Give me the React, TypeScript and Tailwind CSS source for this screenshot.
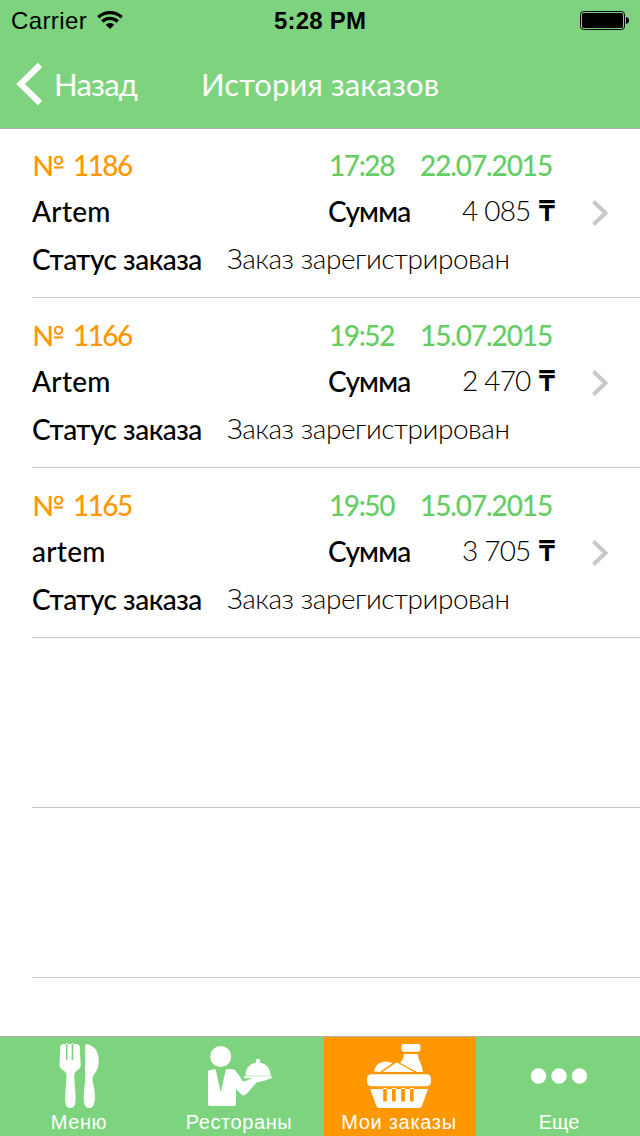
import type { ReactNode } from "react";

type Order = { id: string; name: string; time: string; date: string; sum: string };

const orders: Order[] = [
  { id: "1186", name: "Artem", time: "17:28", date: "22.07.2015", sum: "4 085" },
  { id: "1166", name: "Artem", time: "19:52", date: "15.07.2015", sum: "2 470" },
  { id: "1165", name: "artem", time: "19:50", date: "15.07.2015", sum: "3 705" },
];

function StatusBar() {
  return (
    <div className="flex h-10 items-center justify-between pr-[11px] pl-[11px] font-['Liberation_Sans',sans-serif] text-2xl leading-10 text-black">
      <div className="flex w-[263px] items-center gap-2.5">
        <span className="pt-0.5 tracking-[0.4px]">Carrier</span>
        <svg width="26" height="20" viewBox="0 0 26 20" fill="none" stroke="#000" strokeWidth="3.3">
          <path d="M1.3 7.2a17 17 0 0 1 23.4 0" />
          <path d="M5.3 11.5a11 11 0 0 1 15.4 0" />
          <path d="M13 19l-4.3-4.3a6 6 0 0 1 8.6 0z" fill="#000" stroke="none" />
        </svg>
      </div>
      <span className="grow pt-0.5 font-bold tracking-[0.2px]">5:28 PM</span>
      <svg width="50" height="20" viewBox="0 0 50 20">
        <rect x="1.5" y="1.5" width="44" height="18" rx="3" fill="none" stroke="#000" />
        <rect x="3" y="3" width="41" height="15" rx="1.5" />
        <path d="M47 7q3 .6 3 3.500t-3 3.500z" />
      </svg>
    </div>
  );
}

function Header() {
  return (
    <header className="relative z-10 h-[129px] shrink-0 border-b border-[#b2b2b2] bg-[#7ed47e]">
      <StatusBar />
      <div className="flex h-[88px] items-center pl-4 font-['Lato',sans-serif] text-[31px] leading-[88px] text-white">
        <svg width="27" height="44" viewBox="0 0 27 44" fill="none" stroke="#fff" strokeWidth="6">
          <path d="M24 3L4.500 22L24 41" />
        </svg>
        <span className="w-[147px] pl-[11px] tracking-[-0.8px]">Назад</span>
        <h1 className="pl-[11px] tracking-[0.1px]">История заказов</h1>
      </div>
    </header>
  );
}

function OrderRow({ order }: { order: Order }) {
  return (
    <li className="ml-8 flex h-[170px] items-center border-b border-[#c8c7cc] text-[28px] leading-10 font-medium text-black">
      <div className="mt-px h-[136px] w-[560px]">
        <div className="flex h-[46px]">
          <span className="w-[41px] text-[#ff9800]">№</span>
          <span className="w-[256px] tracking-[-1.6px] text-[#ff9800]">{order.id}</span>
          <span className="w-[91px] tracking-[-1.4px] text-[#64cd64]">{order.time}</span>
          <span className="tracking-[-1.1px] text-[#64cd64]">{order.date}</span>
        </div>
        <div className="flex h-12">
          <span className="w-[296px] tracking-[0.3px]">{order.name}</span>
          <span className="w-[134px] tracking-[-0.8px]">Сумма</span>
          <span className="-mt-px w-[76px] font-light tracking-[-0.8px]">{order.sum}</span>
          <span className="-mt-px font-bold">₸</span>
        </div>
        <div className="flex h-10">
          <span className="w-[195px] tracking-[-0.5px]">Статус заказа</span>
          <span className="-mt-px font-light tracking-[-0.45px]">Заказ зарегистрирован</span>
        </div>
      </div>
      <svg width="18" height="28" viewBox="0 0 18 28" fill="none" stroke="#c7c7cc" strokeWidth="4">
        <path d="M1.500 2.500L13.500 14L1.500 25.500" />
      </svg>
    </li>
  );
}

function MenuIcon() {
  return (
    <>
      <path fillRule="evenodd" d="M60.300 9Q61 7 63.500 7H76.500Q79 7 79.700 9L80.700 28Q80.700 31.500 77 33.500Q74.200 35 74.200 39L75.700 61Q76 71 70.300 71Q64.700 71 65 61L66.500 39Q66.500 35 63.500 33.500Q59.500 31.500 59.500 28ZM65.900 6V23.300H67.500V6ZM71.700 6V23.300H73.300V6Z" />
      <path d="M85.200 8.500Q85.200 7 87 7Q98.800 10 98.800 24.500Q98.800 32 94 37.500Q91.800 40 92.500 44Q95.200 54 95 61Q94.500 71 89.300 71Q83.500 71 83.700 61Q83.800 53 85.200 44Z" />
    </>
  );
}

function WaiterIcon() {
  return (
    <>
      <circle cx="60.700" cy="19.500" r="10.500" />
      <path d="M48 34.500Q48.500 32.500 55.700 32.300L60.700 55.500L66 32.300H72.500Q75.200 32.500 76.200 34.500L83.300 44.700L93 41H110Q109 43 96.500 45.500L87 56.500Q83.500 60 81.500 57.500L76 52V67Q76 69 74 69H50Q48 69 48 67Z" />
      <path d="M84 39.200H111.800V41.200H84ZM85.300 38.800Q86 27.500 96 25.600H100Q110 27.500 110.700 38.800Z" />
      <circle cx="98" cy="24" r="2.300" />
    </>
  );
}

function BasketIcon() {
  return (
    <>
      <rect x="81.500" y="7" width="19" height="7.800" rx="2.800" />
      <path d="M84 17H97.800Q98 21.500 100.500 26Q102.500 30 102.800 35H97L80 25.700Q84 22 84 17Z" />
      <path d="M53.800 34.500Q56.500 24.500 65.500 24.500Q69.500 24.500 72.300 26.300L60 35Z" />
      <path d="M62.700 35L75.500 26Q76.700 25.300 78 26L94 35Z" />
      <rect x="47" y="37.300" width="64" height="12" rx="4.500" />
      <path fillRule="evenodd" d="M50.300 52H108L102.500 67.500Q101.500 71 98 71H60Q56.800 71 55.800 67.500ZM63.200 51V64.500H66.800V51ZM72 51V64.500H75.700V51ZM81.200 51V64.500H84.900V51ZM90 51V64.500H93.600V51Z" />
    </>
  );
}

function MoreIcon() {
  return (
    <>
      <circle cx="58.500" cy="39" r="7.700" />
      <circle cx="79" cy="39" r="7.700" />
      <circle cx="99.500" cy="39" r="7.700" />
    </>
  );
}

function Tab({ label, spacing, active = false, children }: { label: string; spacing: string; active?: boolean; children: ReactNode }) {
  return (
    <div className="flex w-40 justify-center">
      <div className={`flex w-[152px] flex-col items-center overflow-hidden ${active ? "bg-[#ff9800]" : ""}`}>
        <svg className="shrink-0" width="160" height="73" viewBox="0 0 160 73" fill="#fff">
          {children}
        </svg>
        <span className={`-ml-0.5 text-xl leading-6 whitespace-nowrap text-white ${spacing}`}>{label}</span>
      </div>
    </div>
  );
}

export default function App() {
  return (
    <div className="flex h-[1136px] w-[640px] flex-col overflow-hidden bg-white">
      <Header />
      <ul className="-mt-px grow font-['Lato',sans-serif]">
        {orders.map((order) => (
          <OrderRow key={order.id} order={order} />
        ))}
        <li className="ml-8 h-[170px] border-b border-[#c8c7cc]" />
        <li className="ml-8 h-[170px] border-b border-[#c8c7cc]" />
      </ul>
      <nav className="flex h-[100px] shrink-0 border-t border-[#b2b2b2] bg-[#7ed47e] font-['Liberation_Sans',sans-serif]">
        <Tab label="Меню" spacing="tracking-[0.6px]"><MenuIcon /></Tab>
        <Tab label="Рестораны" spacing="tracking-[0.6px]"><WaiterIcon /></Tab>
        <Tab label="Мои заказы" spacing="tracking-[0.7px]" active><BasketIcon /></Tab>
        <Tab label="Еще" spacing="tracking-normal"><MoreIcon /></Tab>
      </nav>
    </div>
  );
}
